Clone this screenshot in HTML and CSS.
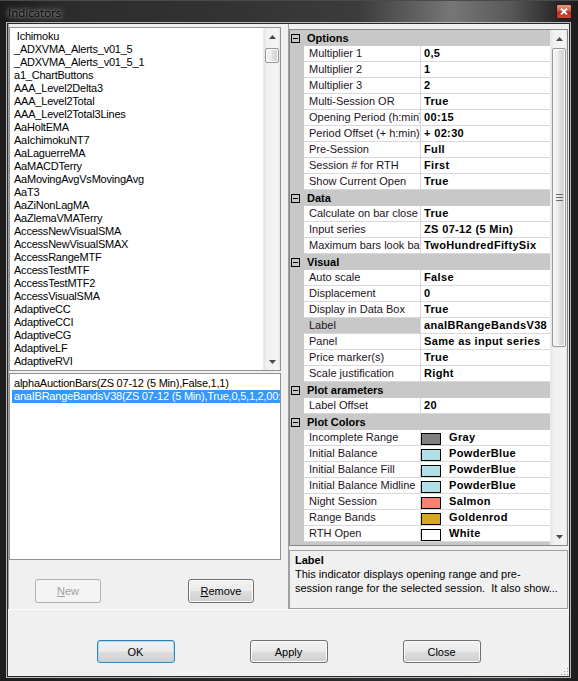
FILE: index.html
```html
<!DOCTYPE html>
<html>
<head>
<meta charset="utf-8">
<title>Indicators</title>
<link rel="stylesheet" href="styles.css">
</head>
<body>
<div class="window">
  <div class="titlebar">
    <span class="title">Indicators</span>
    <div class="close-btn">
      <svg width="8" height="7" viewBox="0 0 8 7"><path d="M1 0.5 L7 6.5 M7 0.5 L1 6.5" stroke="#fff" stroke-width="1.8" fill="none"/></svg>
    </div>
  </div>
  <div class="frame">
    <div class="client">
      <div class="top">
        <div class="left-pane">
          <div class="listbox list-avail">
            <div class="items">
              <div class="item">&nbsp;Ichimoku</div>
              <div class="item">_ADXVMA_Alerts_v01_5</div>
              <div class="item">_ADXVMA_Alerts_v01_5_1</div>
              <div class="item">a1_ChartButtons</div>
              <div class="item">AAA_Level2Delta3</div>
              <div class="item">AAA_Level2Total</div>
              <div class="item">AAA_Level2Total3Lines</div>
              <div class="item">AaHoltEMA</div>
              <div class="item">AaIchimokuNT7</div>
              <div class="item">AaLaguerreMA</div>
              <div class="item">AaMACDTerry</div>
              <div class="item">AaMovingAvgVsMovingAvg</div>
              <div class="item">AaT3</div>
              <div class="item">AaZiNonLagMA</div>
              <div class="item">AaZlemaVMATerry</div>
              <div class="item">AccessNewVisualSMA</div>
              <div class="item">AccessNewVisualSMAX</div>
              <div class="item">AccessRangeMTF</div>
              <div class="item">AccessTestMTF</div>
              <div class="item">AccessTestMTF2</div>
              <div class="item">AccessVisualSMA</div>
              <div class="item">AdaptiveCC</div>
              <div class="item">AdaptiveCCI</div>
              <div class="item">AdaptiveCG</div>
              <div class="item">AdaptiveLF</div>
              <div class="item">AdaptiveRVI</div>
            </div>
            <div class="vscroll">
              <div class="arrow-btn"><svg width="7" height="4" viewBox="0 0 7 4"><path d="M0 4 L3.5 0 L7 4 Z" fill="#4a4a4a"/></svg></div>
              <div class="track small-track"><div class="thumb thumb-small"></div></div>
              <div class="arrow-btn"><svg width="7" height="4" viewBox="0 0 7 4"><path d="M0 0 L3.5 4 L7 0 Z" fill="#4a4a4a"/></svg></div>
            </div>
          </div>
          <div class="listbox list-sel">
            <div class="item">alphaAuctionBars(ZS 07-12 (5 Min),False,1,1)</div>
            <div class="item selected">anaIBRangeBandsV38(ZS 07-12 (5 Min),True,0,5,1,2,00:15,+02:30)</div>
          </div>
          <div class="left-buttons">
            <button class="btn btn-small" disabled><u>N</u>ew</button>
            <button class="btn btn-small"><u>R</u>emove</button>
          </div>
        </div>
        <div class="splitter"></div>
        <div class="right-pane">
          <div class="propgrid">
            <div class="rows">
              <div class="cat"><span class="gutter"><span class="minus"></span></span><span class="cat-label">Options</span></div>
              <div class="prop"><span class="gutter"></span><span class="name">Multiplier 1</span><span class="value">0,5</span></div>
              <div class="prop"><span class="gutter"></span><span class="name">Multiplier 2</span><span class="value">1</span></div>
              <div class="prop"><span class="gutter"></span><span class="name">Multiplier 3</span><span class="value">2</span></div>
              <div class="prop"><span class="gutter"></span><span class="name">Multi-Session OR</span><span class="value">True</span></div>
              <div class="prop"><span class="gutter"></span><span class="name">Opening Period (h:min)</span><span class="value">00:15</span></div>
              <div class="prop"><span class="gutter"></span><span class="name">Period Offset (+ h:min)</span><span class="value">+ 02:30</span></div>
              <div class="prop"><span class="gutter"></span><span class="name">Pre-Session</span><span class="value">Full</span></div>
              <div class="prop"><span class="gutter"></span><span class="name">Session # for RTH</span><span class="value">First</span></div>
              <div class="prop"><span class="gutter"></span><span class="name">Show Current Open</span><span class="value">True</span></div>
              <div class="cat"><span class="gutter"><span class="minus"></span></span><span class="cat-label">Data</span></div>
              <div class="prop"><span class="gutter"></span><span class="name">Calculate on bar close</span><span class="value">True</span></div>
              <div class="prop"><span class="gutter"></span><span class="name">Input series</span><span class="value">ZS 07-12 (5 Min)</span></div>
              <div class="prop"><span class="gutter"></span><span class="name">Maximum bars look back</span><span class="value">TwoHundredFiftySix</span></div>
              <div class="cat"><span class="gutter"><span class="minus"></span></span><span class="cat-label">Visual</span></div>
              <div class="prop"><span class="gutter"></span><span class="name">Auto scale</span><span class="value">False</span></div>
              <div class="prop"><span class="gutter"></span><span class="name">Displacement</span><span class="value">0</span></div>
              <div class="prop"><span class="gutter"></span><span class="name">Display in Data Box</span><span class="value">True</span></div>
              <div class="prop sel"><span class="gutter"></span><span class="name">Label</span><span class="value">anaIBRangeBandsV38</span></div>
              <div class="prop"><span class="gutter"></span><span class="name">Panel</span><span class="value">Same as input series</span></div>
              <div class="prop"><span class="gutter"></span><span class="name">Price marker(s)</span><span class="value">True</span></div>
              <div class="prop"><span class="gutter"></span><span class="name">Scale justification</span><span class="value">Right</span></div>
              <div class="cat"><span class="gutter"><span class="minus"></span></span><span class="cat-label">Plot arameters</span></div>
              <div class="prop"><span class="gutter"></span><span class="name">Label Offset</span><span class="value">20</span></div>
              <div class="cat"><span class="gutter"><span class="minus"></span></span><span class="cat-label">Plot Colors</span></div>
              <div class="prop"><span class="gutter"></span><span class="name">Incomplete Range</span><span class="value color"><span class="swatch sw-gray"></span>Gray</span></div>
              <div class="prop"><span class="gutter"></span><span class="name">Initial Balance</span><span class="value color"><span class="swatch sw-powder"></span>PowderBlue</span></div>
              <div class="prop"><span class="gutter"></span><span class="name">Initial Balance Fill</span><span class="value color"><span class="swatch sw-powder"></span>PowderBlue</span></div>
              <div class="prop"><span class="gutter"></span><span class="name">Initial Balance Midline</span><span class="value color"><span class="swatch sw-powder"></span>PowderBlue</span></div>
              <div class="prop"><span class="gutter"></span><span class="name">Night Session</span><span class="value color"><span class="swatch sw-salmon"></span>Salmon</span></div>
              <div class="prop"><span class="gutter"></span><span class="name">Range Bands</span><span class="value color"><span class="swatch sw-gold"></span>Goldenrod</span></div>
              <div class="prop"><span class="gutter"></span><span class="name">RTH Open</span><span class="value color"><span class="swatch sw-white"></span>White</span></div>
              <div class="cat"><span class="gutter"><span class="minus"></span></span><span class="cat-label">Plot Fills</span></div>
            </div>
            <div class="vscroll">
              <div class="arrow-btn"><svg width="7" height="4" viewBox="0 0 7 4"><path d="M0 4 L3.5 0 L7 4 Z" fill="#4a4a4a"/></svg></div>
              <div class="track grid-track">
                <div class="thumb thumb-big">
                  <svg width="7" height="7" viewBox="0 0 7 7"><path d="M0 0.5 H7 M0 3.5 H7 M0 6.5 H7" stroke="#6a6a6a" stroke-width="1"/></svg>
                </div>
              </div>
              <div class="arrow-btn"><svg width="7" height="4" viewBox="0 0 7 4"><path d="M0 0 L3.5 4 L7 0 Z" fill="#4a4a4a"/></svg></div>
            </div>
          </div>
          <div class="desc">
            <div class="desc-title">Label</div>
            <div class="desc-text">This indicator displays opening range and pre-<br>session range for the selected session.&nbsp; It also show...</div>
          </div>
        </div>
      </div>
      <div class="bottom">
        <button class="btn btn-main btn-default">OK</button>
        <button class="btn btn-main">Apply</button>
        <button class="btn btn-main">Close</button>
      </div>
      <div class="grip">
        <svg width="10" height="10" viewBox="0 0 10 10">
          <rect x="8" y="2" width="1" height="1" fill="#9a9a9a"/>
          <rect x="5" y="5" width="1" height="1" fill="#9a9a9a"/>
          <rect x="8" y="5" width="1" height="1" fill="#9a9a9a"/>
          <rect x="2" y="8" width="1" height="1" fill="#9a9a9a"/>
          <rect x="5" y="8" width="1" height="1" fill="#9a9a9a"/>
          <rect x="8" y="8" width="1" height="1" fill="#9a9a9a"/>
        </svg>
      </div>
    </div>
  </div>
</div>
</body>
</html>
```

FILE: styles.css
```css
* { box-sizing: border-box; }

html, body {
  margin: 0;
  padding: 0;
  background: #1c1c1c;
}

body {
  font-family: "Liberation Sans", Arial, sans-serif;
  font-size: 11px;
  color: #000;
}

.window {
  position: relative;
  width: 578px;
  height: 681px;
  display: flex;
  flex-direction: column;
  padding: 0 7px 3px 6px;
  background: linear-gradient(to right, #1e1e1e 0%, #262626 50%, #2f3338 90%, #1e1e1e 100%);
}

.titlebar {
  height: 22px;
  flex: none;
  display: flex;
  align-items: center;
  margin: 0 -7px 0 -6px;
  padding-left: 8px;
  background: linear-gradient(to right, #1c1c1c 0%, #2c2c2c 10%, #333 40%, #3c3c3c 62%, #767676 78%, #5a5a5a 88%, #2a2a2a 96%, #1c1c1c 100%);
  border-top: 1px solid #4a4a4a;
}

.title {
  font-family: "Open Sans", "Noto Sans", sans-serif;
  font-size: 11.5px;
  color: #000;
  text-shadow: 0 0 3px #a0a0a0, 0 0 6px #8a8a8a, 0 0 9px #7a7a7a;
  padding-top: 1px;
}

.close-btn {
  position: absolute;
  top: 4px;
  right: 6px;
  width: 16px;
  height: 15px;
  border: 1px solid #3a1010;
  border-radius: 2px;
  background: linear-gradient(to bottom, #e79a8a 0%, #cf5c48 45%, #b8321e 55%, #c94a35 100%);
  display: flex;
  align-items: center;
  justify-content: center;
}

.close-btn svg { display: block; }

.frame {
  flex: 1;
  display: flex;
  border: 1px solid #b8b8b8;
}

.client {
  position: relative;
  flex: 1;
  display: flex;
  flex-direction: column;
  border: 1px solid #2a2a2a;
  background: #f0f0f0;
}

.top {
  height: 586px;
  flex: none;
  display: grid;
  grid-template-columns: 280px 1px 280px;
  border-bottom: 1px solid #fcfcfc;
}

/* Left pane */
.left-pane {
  display: flex;
  flex-direction: column;
  padding-top: 3px;
  border-left: 1px solid #a0a0a0;
}

.listbox {
  width: 272px;
  background: #fff;
  border: 1px solid #8e9095;
  overflow: hidden;
}

.list-avail {
  height: 344px;
  display: flex;
}

.list-avail .items {
  flex: 1;
  padding: 2px 2px;
  overflow: hidden;
}

.item {
  height: 13px;
  line-height: 13px;
  padding: 0 2px;
  white-space: nowrap;
  overflow: hidden;
  letter-spacing: -0.22px;
}

.list-sel {
  height: 187px;
  margin-top: 2px;
  padding: 3px 0 0 2px;
}

.item.selected {
  background: #3399ff;
  color: #fff;
}

.left-buttons {
  display: flex;
  gap: 87px;
  margin-top: 19px;
  padding-left: 26px;
}

/* Buttons */
.btn {
  font-family: "Liberation Sans", Arial, sans-serif;
  font-size: 11px;
  color: #000;
  height: 23px;
  padding: 0;
  border: 1px solid #707070;
  border-radius: 3px;
  background: linear-gradient(to bottom, #f2f2f2 0%, #ebebeb 48%, #dddddd 52%, #cfcfcf 100%);
  box-shadow: inset 0 0 0 1px #fbfbfb;
}

.btn u { text-decoration: underline; text-underline-offset: 1px; }

.btn-small { width: 66px; height: 24px; }

.btn:disabled {
  color: #a0a0a0;
  border-color: #adb2b5;
  background: #f4f4f4;
  box-shadow: none;
}

.btn-main { width: 78px; }

.btn-default {
  border-color: #3c7fb1;
  box-shadow: inset 0 0 0 1px #a6dcf4;
}

/* Splitter */
.splitter {
  background: #a0a0a0;
}

/* Right pane */
.right-pane {
  display: flex;
  flex-direction: column;
  padding-top: 5px;
}

.propgrid {
  width: 279px;
  height: 517px;
  border: 1px solid #828790;
  background: #fff;
  display: flex;
  overflow: hidden;
}

.rows {
  flex: 1;
  overflow: hidden;
}

.cat, .prop {
  height: 16px;
  display: flex;
  white-space: nowrap;
}

.gutter {
  width: 14px;
  flex: none;
  background: #c8c8c8;
  display: flex;
  align-items: center;
  padding-left: 1px;
}

.cat {
  background: #c8c8c8;
}

.minus {
  position: relative;
  width: 9px;
  height: 9px;
  border: 1px solid #000;
  display: block;
}

.minus::after {
  content: "";
  position: absolute;
  left: 1px;
  top: 3px;
  width: 5px;
  height: 1px;
  background: #000;
}

.cat-label {
  font-weight: bold;
  line-height: 16px;
  padding-left: 3px;
}

.name {
  width: 117px;
  flex: none;
  line-height: 15px;
  padding-left: 5px;
  overflow: hidden;
  color: #1e1226;
  border-bottom: 1px solid #d8d8d8;
  border-right: 1px solid #d8d8d8;
}

.value {
  flex: 1;
  line-height: 15px;
  padding-left: 3px;
  font-weight: bold;
  letter-spacing: 0.35px;
  overflow: hidden;
  border-bottom: 1px solid #d8d8d8;
}

.prop.sel .name {
  background: #c8c8c8;
}

.value.color {
  padding-left: 0;
  display: flex;
}

.swatch {
  width: 20px;
  height: 12px;
  margin-top: 3px;
  margin-right: 8px;
  border: 1px solid #000;
  flex: none;
}

.sw-gray { background: #808080; }
.sw-powder { background: #b0e0e6; }
.sw-salmon { background: #fa8072; }
.sw-gold { background: #daa520; }
.sw-white { background: #ffffff; }

/* Scrollbars */
.vscroll {
  width: 17px;
  flex: none;
  display: flex;
  flex-direction: column;
  background: linear-gradient(to right, #e3e3e3 0%, #f0f0f0 15%, #f4f4f4 85%, #e6e6e6 100%);
  border-left: 1px solid #ececec;
}

.arrow-btn {
  height: 17px;
  flex: none;
  display: flex;
  align-items: center;
  justify-content: center;
}

.arrow-btn svg { display: block; }

.track {
  flex: 1;
  padding: 1px 1px 0 1px;
}

.small-track { padding-top: 3px; }

.thumb {
  width: 100%;
  border: 1px solid #979797;
  border-radius: 2px;
  background: linear-gradient(to right, #f4f4f4 0%, #ececec 45%, #dedede 55%, #d2d2d2 100%);
  box-shadow: inset 0 0 0 1px #fafafa;
  display: flex;
  align-items: center;
  justify-content: center;
}

.thumb-small { height: 15px; }
.thumb-big { height: 299px; }

/* Description */
.desc {
  width: 279px;
  height: 59px;
  margin-top: 4px;
  border: 1px solid #a0a0a0;
  background: #f0f0f0;
  padding: 2px 0 0 5px;
  line-height: 14px;
}

.desc-title { font-weight: bold; }

/* Bottom bar */
.bottom {
  flex: 1;
  display: flex;
  justify-content: center;
  gap: 75px;
  padding-top: 30px;
}

.grip {
  position: absolute;
  right: 0;
  bottom: 0;
  width: 10px;
  height: 10px;
}

.grip svg { display: block; }
```
